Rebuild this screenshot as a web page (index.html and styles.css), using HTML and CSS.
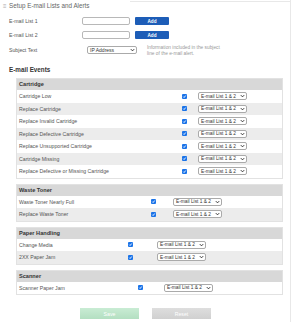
FILE: index.html
```html
<!DOCTYPE html>
<html lang="en">
<head>
    <meta charset="UTF-8">
    <title>Setup E-mail Lists and Alerts</title>
    <link rel="stylesheet" href="styles.css">
</head>
<body>
    <div class="panel">
        <div class="panel-head">
            <span class="toggle">&#8801;</span>
            <span class="panel-title">Setup E-mail Lists and Alerts</span>
            <span class="rule"></span>
        </div>

        <div class="lists">
            <div class="field">
                <label class="field-label">E-mail List 1</label>
                <input class="text-input" type="text">
                <button class="add-btn">Add</button>
            </div>
            <div class="field">
                <label class="field-label">E-mail List 2</label>
                <input class="text-input" type="text">
                <button class="add-btn">Add</button>
            </div>
            <div class="field subject">
                <label class="field-label">Subject Text</label>
                <div class="fake-select subject-select">IP Address <svg viewBox="0 0 6 4"><path d="M1 1l2 2 2-2" /></svg></div>
                <div class="hint">Information included in the subject<br>line of the e-mail alert.</div>
            </div>
        </div>

        <h3 class="events-title">E-mail Events</h3>

        <div class="event-group cartridge">
            <div class="group-head">Cartridge</div>
            <div class="event-row"><span>Cartridge Low</span><span class="check"><svg viewBox="0 0 6 6"><path d="M1.5 3.2l1 1 2-2.4" /></svg></span><span></span><div class="fake-select">E-mail List 1 &amp; 2 <svg viewBox="0 0 6 4"><path d="M1 1l2 2 2-2" /></svg></div></div>
            <div class="event-row"><span>Replace Cartridge</span><span class="check"><svg viewBox="0 0 6 6"><path d="M1.5 3.2l1 1 2-2.4" /></svg></span><span></span><div class="fake-select">E-mail List 1 &amp; 2 <svg viewBox="0 0 6 4"><path d="M1 1l2 2 2-2" /></svg></div></div>
            <div class="event-row"><span>Replace Invalid Cartridge</span><span class="check"><svg viewBox="0 0 6 6"><path d="M1.5 3.2l1 1 2-2.4" /></svg></span><span></span><div class="fake-select">E-mail List 1 &amp; 2 <svg viewBox="0 0 6 4"><path d="M1 1l2 2 2-2" /></svg></div></div>
            <div class="event-row"><span>Replace Defective Cartridge</span><span class="check"><svg viewBox="0 0 6 6"><path d="M1.5 3.2l1 1 2-2.4" /></svg></span><span></span><div class="fake-select">E-mail List 1 &amp; 2 <svg viewBox="0 0 6 4"><path d="M1 1l2 2 2-2" /></svg></div></div>
            <div class="event-row"><span>Replace Unsupported Cartridge</span><span class="check"><svg viewBox="0 0 6 6"><path d="M1.5 3.2l1 1 2-2.4" /></svg></span><span></span><div class="fake-select">E-mail List 1 &amp; 2 <svg viewBox="0 0 6 4"><path d="M1 1l2 2 2-2" /></svg></div></div>
            <div class="event-row"><span>Cartridge Missing</span><span class="check"><svg viewBox="0 0 6 6"><path d="M1.5 3.2l1 1 2-2.4" /></svg></span><span></span><div class="fake-select">E-mail List 1 &amp; 2 <svg viewBox="0 0 6 4"><path d="M1 1l2 2 2-2" /></svg></div></div>
            <div class="event-row"><span>Replace Defective or Missing Cartridge</span><span class="check"><svg viewBox="0 0 6 6"><path d="M1.5 3.2l1 1 2-2.4" /></svg></span><span></span><div class="fake-select">E-mail List 1 &amp; 2 <svg viewBox="0 0 6 4"><path d="M1 1l2 2 2-2" /></svg></div></div>
        </div>

        <div class="event-group waste">
            <div class="group-head">Waste Toner</div>
            <div class="event-row"><span>Waste Toner Nearly Full</span><span class="check"><svg viewBox="0 0 6 6"><path d="M1.5 3.2l1 1 2-2.4" /></svg></span><span></span><div class="fake-select">E-mail List 1 &amp; 2 <svg viewBox="0 0 6 4"><path d="M1 1l2 2 2-2" /></svg></div></div>
            <div class="event-row"><span>Replace Waste Toner</span><span class="check"><svg viewBox="0 0 6 6"><path d="M1.5 3.2l1 1 2-2.4" /></svg></span><span></span><div class="fake-select">E-mail List 1 &amp; 2 <svg viewBox="0 0 6 4"><path d="M1 1l2 2 2-2" /></svg></div></div>
        </div>

        <div class="event-group paper">
            <div class="group-head">Paper Handling</div>
            <div class="event-row"><span>Change Media</span><span class="check"><svg viewBox="0 0 6 6"><path d="M1.5 3.2l1 1 2-2.4" /></svg></span><span></span><div class="fake-select">E-mail List 1 &amp; 2 <svg viewBox="0 0 6 4"><path d="M1 1l2 2 2-2" /></svg></div></div>
            <div class="event-row"><span>2XX Paper Jam</span><span class="check"><svg viewBox="0 0 6 6"><path d="M1.5 3.2l1 1 2-2.4" /></svg></span><span></span><div class="fake-select">E-mail List 1 &amp; 2 <svg viewBox="0 0 6 4"><path d="M1 1l2 2 2-2" /></svg></div></div>
        </div>

        <div class="event-group scanner">
            <div class="group-head">Scanner</div>
            <div class="event-row"><span>Scanner Paper Jam</span><span class="check"><svg viewBox="0 0 6 6"><path d="M1.5 3.2l1 1 2-2.4" /></svg></span><span></span><div class="fake-select">E-mail List 1 &amp; 2 <svg viewBox="0 0 6 4"><path d="M1 1l2 2 2-2" /></svg></div></div>
        </div>

        <div class="actions">
            <button class="btn save">Save</button>
            <button class="btn reset">Reset</button>
        </div>
    </div>
</body>
</html>
```

FILE: styles.css
```css
/* Core Styling */
*, *:before, *:after {
    margin: 0;
    padding: 0;
    box-sizing: border-box;
}

body {
    font-family: "Liberation Sans", Arial, sans-serif;
    background-color: #fff;
    color: #555;
    margin: 0;
}

.panel {
    width: 291px;
    min-height: 322px;
    border-right: 1px solid #e8e8e8;
}

/* Header */
.panel-head {
    display: flex;
    align-items: center;
    height: 11px;
    padding-left: 3px;
}

.toggle {
    font-size: 6px;
    color: #aaa;
    width: 6px;
}

.panel-title {
    font-size: 6.3px;
    color: #666;
    white-space: nowrap;
}

.rule {
    flex: 1;
    align-self: flex-start;
    margin: 1px 0 0 40px;
    border-top: 1px solid #e8e8e8;
}

/* Lists */
.lists {
    padding: 6px 0 0 9px;
}

.field {
    display: grid;
    grid-template-columns: 68px 48px 34px;
    grid-template-rows: 8px;
    column-gap: 5px;
    align-items: center;
    height: 8px;
    margin-bottom: 6px;
}

.field:nth-child(2) {
    margin-bottom: 7px;
}

.field.subject {
    grid-template-columns: 68px 50px 1fr;
    column-gap: 10px;
}

.field-label {
    font-size: 5.2px;
    color: #555;
}

.text-input {
    height: 8px;
    border: 1px solid #b8b8b8;
    border-radius: 2px;
    background: #fff;
}

.add-btn {
    height: 8px;
    background-color: #1d5db7;
    color: #fff;
    border: none;
    border-radius: 1px;
    font-family: inherit;
    font-size: 4.6px;
    font-weight: bold;
}

.hint {
    align-self: start;
    margin-top: -1px;
    font-size: 4.8px;
    line-height: 6px;
    color: #999;
    white-space: nowrap;
}

/* Fake selects */
.fake-select {
    display: flex;
    align-items: center;
    justify-content: space-between;
    height: 8px;
    padding: 0 1px 0 2px;
    border: 1px solid #aaa;
    border-radius: 2px;
    background: #fff;
    font-size: 4.8px;
    color: #333;
    white-space: nowrap;
}

.fake-select svg {
    width: 5px;
    height: 4px;
    fill: none;
    stroke: #333;
    stroke-width: 1.2;
}

.subject-select {
    width: 50px;
    font-size: 5px;
}

/* Events */
.events-title {
    font-size: 6.3px;
    font-weight: bold;
    color: #333;
    padding-left: 9px;
    margin: 12px 0 4px;
    line-height: 8px;
}

.event-group {
    margin: 0 0 5px 16px;
    width: 267px;
    border: 1px solid #e2e2e2;
}

.group-head {
    height: 11px;
    line-height: 11px;
    padding-left: 2px;
    background-color: #d8d8d8;
    font-size: 5.6px;
    font-weight: bold;
    color: #333;
}

.event-row {
    display: grid;
    align-items: center;
    height: 12.5px;
    padding-left: 2px;
    font-size: 5.2px;
    color: #555;
    white-space: nowrap;
}

.event-row:nth-child(odd) {
    background-color: #ececec;
}

.event-row .fake-select {
    width: 49px;
}

.cartridge .event-row {
    grid-template-columns: 163px 6px 10px 49px;
}

.waste .event-row {
    grid-template-columns: 132px 6px 16px 49px;
}

.paper .event-row {
    grid-template-columns: 109px 6px 23px 49px;
}

.scanner .event-row {
    grid-template-columns: 119px 6px 20px 49px;
}

.check {
    display: block;
    width: 5px;
    height: 5px;
    background-color: #1a73e8;
    border-radius: 1px;
}

.check svg {
    display: block;
    width: 5px;
    height: 5px;
    fill: none;
    stroke: #fff;
    stroke-width: 1.1;
}

/* Actions */
.actions {
    display: flex;
    gap: 13px;
    padding: 8px 0 0 80px;
}

.btn {
    width: 59px;
    height: 11px;
    border: none;
    color: #fff;
    font-family: inherit;
    font-size: 5.2px;
}

.btn.save {
    background: linear-gradient(#c9ecd4, #b3dfc1);
}

.btn.reset {
    background: linear-gradient(#dedede, #d0d0d0);
}
```
